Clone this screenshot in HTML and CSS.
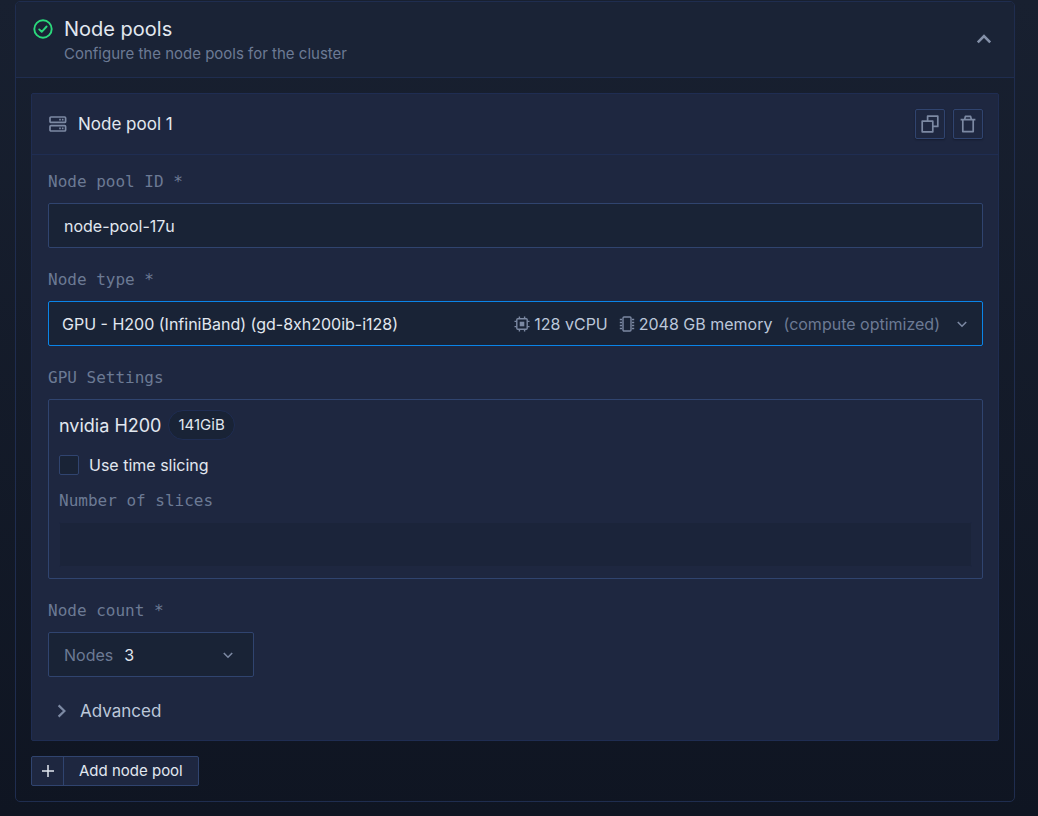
FILE: index.html
```html
<!DOCTYPE html>
<html lang="en">
<head>
    <meta charset="UTF-8">
    <meta name="viewport" content="width=device-width, initial-scale=1.0">
    <title>Node pools</title>
    <link rel="stylesheet" href="styles.css">
</head>
<body>
    <section class="card">
        <header class="card-header">
            <svg class="status-icon" width="20" height="20" viewBox="0 0 20 20" fill="none" stroke="currentColor" stroke-width="1.9" stroke-linecap="round" stroke-linejoin="round" aria-hidden="true">
                <circle cx="10" cy="10" r="8.7"/>
                <path d="M6.2 10.4l2.5 2.4 4.9-5.3"/>
            </svg>
            <div class="card-titles">
                <h2>Node pools</h2>
                <p>Configure the node pools for the cluster</p>
            </div>
            <button type="button" class="btn-collapse" aria-label="Collapse">
                <svg width="16" height="16" viewBox="0 0 16 16" fill="none" stroke="currentColor" stroke-width="2.6" aria-hidden="true">
                    <path d="M1.8 10.4L8 4.2l6.2 6.2"/>
                </svg>
            </button>
        </header>

        <form class="card-body">
            <div class="pool">
                <div class="pool-header">
                    <svg width="18" height="16" viewBox="0 0 18 16" fill="none" stroke="currentColor" stroke-width="1.7" aria-hidden="true">
                        <rect x="1" y="1" width="15.6" height="5.4" rx="1"/>
                        <rect x="1" y="9.6" width="15.6" height="5.4" rx="1"/>
                        <path d="M10.2 3.7h1.6M12.9 3.7h1.6M10.2 12.3h1.6M12.9 12.3h1.6"/>
                    </svg>
                    <h3>Node pool 1</h3>
                    <button type="button" class="btn-icon" aria-label="Duplicate">
                        <svg width="18" height="18" viewBox="0 0 18 18" fill="none" stroke="currentColor" stroke-width="1.7" stroke-linejoin="round" aria-hidden="true">
                            <path d="M6.6 6.2V1.2h10.2v10.2h-5"/>
                            <rect x="1.2" y="6.2" width="10.6" height="10.6"/>
                        </svg>
                    </button>
                    <button type="button" class="btn-icon" aria-label="Delete">
                        <svg width="18" height="18" viewBox="0 0 18 18" fill="none" stroke="currentColor" stroke-width="1.7" stroke-linejoin="round" aria-hidden="true">
                            <path d="M1.6 4.6h14.8M5.6 4.6l.8-3.2h5.2l.8 3.2M3.8 4.6v12h10.4v-12"/>
                        </svg>
                    </button>
                </div>

                <div class="pool-body">
                    <div class="field">
                        <label for="pool-id">Node pool ID *</label>
                        <input type="text" id="pool-id" class="control" value="node-pool-17u">
                    </div>

                    <div class="field">
                        <label for="node-type">Node type *</label>
                        <div class="control select-box active">
                            <select id="node-type">
                                <option>GPU - H200 (InfiniBand) (gd-8xh200ib-i128)</option>
                            </select>
                            <span class="spec">
                                <svg width="16" height="16" viewBox="0 0 16 16" fill="none" stroke="currentColor" stroke-width="1.4" aria-hidden="true">
                                    <rect x="2.8" y="2.8" width="10.4" height="10.4" rx="1"/>
                                    <rect x="6.4" y="6.4" width="3.2" height="3.2" fill="currentColor"/>
                                    <path d="M5.4 .5v2.3M10.6 .5v2.3M5.4 13.2v2.3M10.6 13.2v2.3M.5 5.4h2.3M.5 10.6h2.3M13.2 5.4h2.3M13.2 10.6h2.3"/>
                                </svg>
                                128 vCPU
                            </span>
                            <span class="spec">
                                <svg width="16" height="16" viewBox="0 0 16 16" fill="none" stroke="currentColor" stroke-width="1.4" aria-hidden="true">
                                    <rect x="4" y="1" width="8" height="14" rx="1"/>
                                    <path d="M.8 3.5H3M.8 6.5H3M.8 9.5H3M.8 12.5H3M13 3.5h2.2M13 6.5h2.2M13 9.5h2.2M13 12.5h2.2"/>
                                </svg>
                                2048 GB memory
                            </span>
                            <span class="muted">(compute optimized)</span>
                            <svg class="chevron" width="10" height="10" viewBox="0 0 10 10" fill="none" stroke="currentColor" stroke-width="1.6" aria-hidden="true">
                                <path d="M.8 3L5 7.2 9.2 3"/>
                            </svg>
                        </div>
                    </div>

                    <div class="field">
                        <span class="label">GPU Settings</span>
                        <div class="gpu-box">
                            <div class="gpu-name">
                                nvidia H200
                                <span class="badge">141GiB</span>
                            </div>
                            <label class="check"><input type="checkbox"> Use time slicing</label>
                            <div class="field">
                                <label for="slices">Number of slices</label>
                                <input type="text" id="slices" class="control" disabled>
                            </div>
                        </div>
                    </div>

                    <div class="field">
                        <label for="node-count">Node count *</label>
                        <div class="control select-box count">
                            <span class="muted">Nodes</span>
                            <select id="node-count">
                                <option>3</option>
                            </select>
                            <svg class="chevron" width="10" height="10" viewBox="0 0 10 10" fill="none" stroke="currentColor" stroke-width="1.6" aria-hidden="true">
                                <path d="M.8 3L5 7.2 9.2 3"/>
                            </svg>
                        </div>
                    </div>

                    <button type="button" class="btn-advanced">
                        <svg width="10" height="14" viewBox="0 0 10 14" fill="none" stroke="currentColor" stroke-width="2.2" aria-hidden="true">
                            <path d="M1.6 1.4L7.4 7l-5.8 5.6"/>
                        </svg>
                        Advanced
                    </button>
                </div>
            </div>

            <button type="button" class="btn-add">
                <span class="plus">
                    <svg width="12" height="12" viewBox="0 0 12 12" fill="none" stroke="currentColor" stroke-width="1.5" aria-hidden="true">
                        <path d="M6 0v12M0 6h12"/>
                    </svg>
                </span>
                <span class="text">Add node pool</span>
            </button>
        </form>
    </section>
</body>
</html>
```
FILE: styles.css
```css
* {
    box-sizing: border-box;
}
html {
    min-height: 100%;
    background: linear-gradient(#182030, #0f1522);
}
body {
    margin: 0;
    padding: 1px 23px 14px 15px;
    font-family: Inter, sans-serif;
    font-size: 16px;
    color: #e2e8f0;
}
h2, h3, p {
    margin: 0;
    font-weight: 400;
}
button, input, select {
    font: inherit;
    color: inherit;
}
button {
    padding: 0;
    border: none;
    background: none;
    cursor: pointer;
}
svg {
    display: block;
    flex: none;
}

.card {
    border: 1px solid #1f2d4f;
    border-radius: 5px;
}
.card-header {
    display: flex;
    align-items: flex-start;
    padding: 13px 16px 13px 17px;
    background-color: #1a2336;
    border-bottom: 1px solid #1f2d4f;
    border-radius: 4px 4px 0 0;
}
.status-icon {
    margin: 4px 11px 0 0;
    color: #2bd97c;
}
.card-titles {
    flex: 1;
}
.card-titles h2 {
    font-size: 20px;
    line-height: 28px;
}
.card-titles p {
    font-size: 15px;
    line-height: 21px;
    color: #6c7a94;
}
.btn-collapse {
    align-self: center;
    margin-right: 6px;
    color: #8490a8;
}
.card-body {
    padding: 15px;
}

.pool {
    background-color: #1e2740;
    border: 1px solid #1f2d52;
    border-radius: 2px;
}
.pool-header {
    display: flex;
    align-items: center;
    gap: 8px;
    height: 61px;
    padding: 0 15px 0 17px;
    border-bottom: 1px solid #1f2d52;
    color: #7c89a3;
}
.pool-header h3 {
    flex: 1;
    padding-left: 3px;
    font-size: 17px;
    color: #e2e8f0;
}
.btn-icon {
    display: flex;
    align-items: center;
    justify-content: center;
    width: 30px;
    height: 30px;
    border: 1px solid #30446f;
    border-radius: 2px;
    box-shadow: 0 1px 2px rgba(0, 0, 0, 0.3);
}
.pool-body {
    display: flex;
    flex-direction: column;
    gap: 21px;
    padding: 16px 15px 16px 16px;
}

.field {
    display: flex;
    flex-direction: column;
    gap: 10px;
}
.field > label, .label {
    font-family: "DejaVu Sans Mono", monospace;
    font-size: 16px;
    line-height: 22px;
    color: #6c7a94;
}
.control {
    width: 100%;
    height: 45px;
    padding: 0 15px;
    background-color: #192336;
    border: 1px solid #30446f;
    border-radius: 2px;
    outline: none;
}
.control:disabled {
    opacity: 0.5;
    border-color: #1e2740;
}
.select-box {
    display: flex;
    align-items: center;
    gap: 11px;
}
.select-box select {
    flex: 1;
    min-width: 0;
    padding: 0;
    appearance: none;
    background: none;
    border: none;
    outline: none;
}
.active {
    padding: 0 15px 0 13px;
    border-color: #0a84e8;
}
.spec {
    display: flex;
    align-items: center;
    gap: 4px;
    color: #bcc7da;
}
.spec svg, .chevron {
    color: #7c89a3;
}
.muted {
    color: #6c7a94;
}
.chevron {
    margin-left: 6px;
}
.count {
    width: 206px;
    padding-right: 20px;
}

.gpu-box {
    display: flex;
    flex-direction: column;
    gap: 15px;
    padding: 10px 10px 11px;
    border: 1px solid #30446f;
    border-radius: 2px;
}
.gpu-name {
    display: flex;
    align-items: center;
    gap: 7px;
    font-size: 18px;
}
.badge {
    padding: 0 9px;
    font-size: 15px;
    line-height: 28px;
    background-color: #192336;
    border: 1px solid #1f2d52;
    border-radius: 15px;
}
.check {
    display: flex;
    align-items: center;
    gap: 10px;
    line-height: 20px;
}
.check input {
    width: 20px;
    height: 20px;
    margin: 0;
    appearance: none;
    background-color: #192336;
    border: 1px solid #30446f;
    border-radius: 2px;
}

.btn-advanced {
    display: flex;
    align-items: center;
    align-self: flex-start;
    gap: 13px;
    padding-left: 9px;
    font-size: 17px;
    line-height: 26px;
    color: #bcc7da;
}
.btn-advanced svg {
    color: #7c89a3;
}
.btn-add {
    display: flex;
    height: 30px;
    margin-top: 15px;
    font-size: 15px;
    line-height: 28px;
    background-color: #1e2740;
    border: 1px solid #30446f;
    border-radius: 2px;
}
.btn-add .plus {
    display: flex;
    align-items: center;
    padding: 0 9px 0 10px;
    border-right: 1px solid #30446f;
}
.btn-add .plus, .btn-add .text {
    height: 28px;
}
.btn-add .text {
    padding: 0 15px;
}
```
